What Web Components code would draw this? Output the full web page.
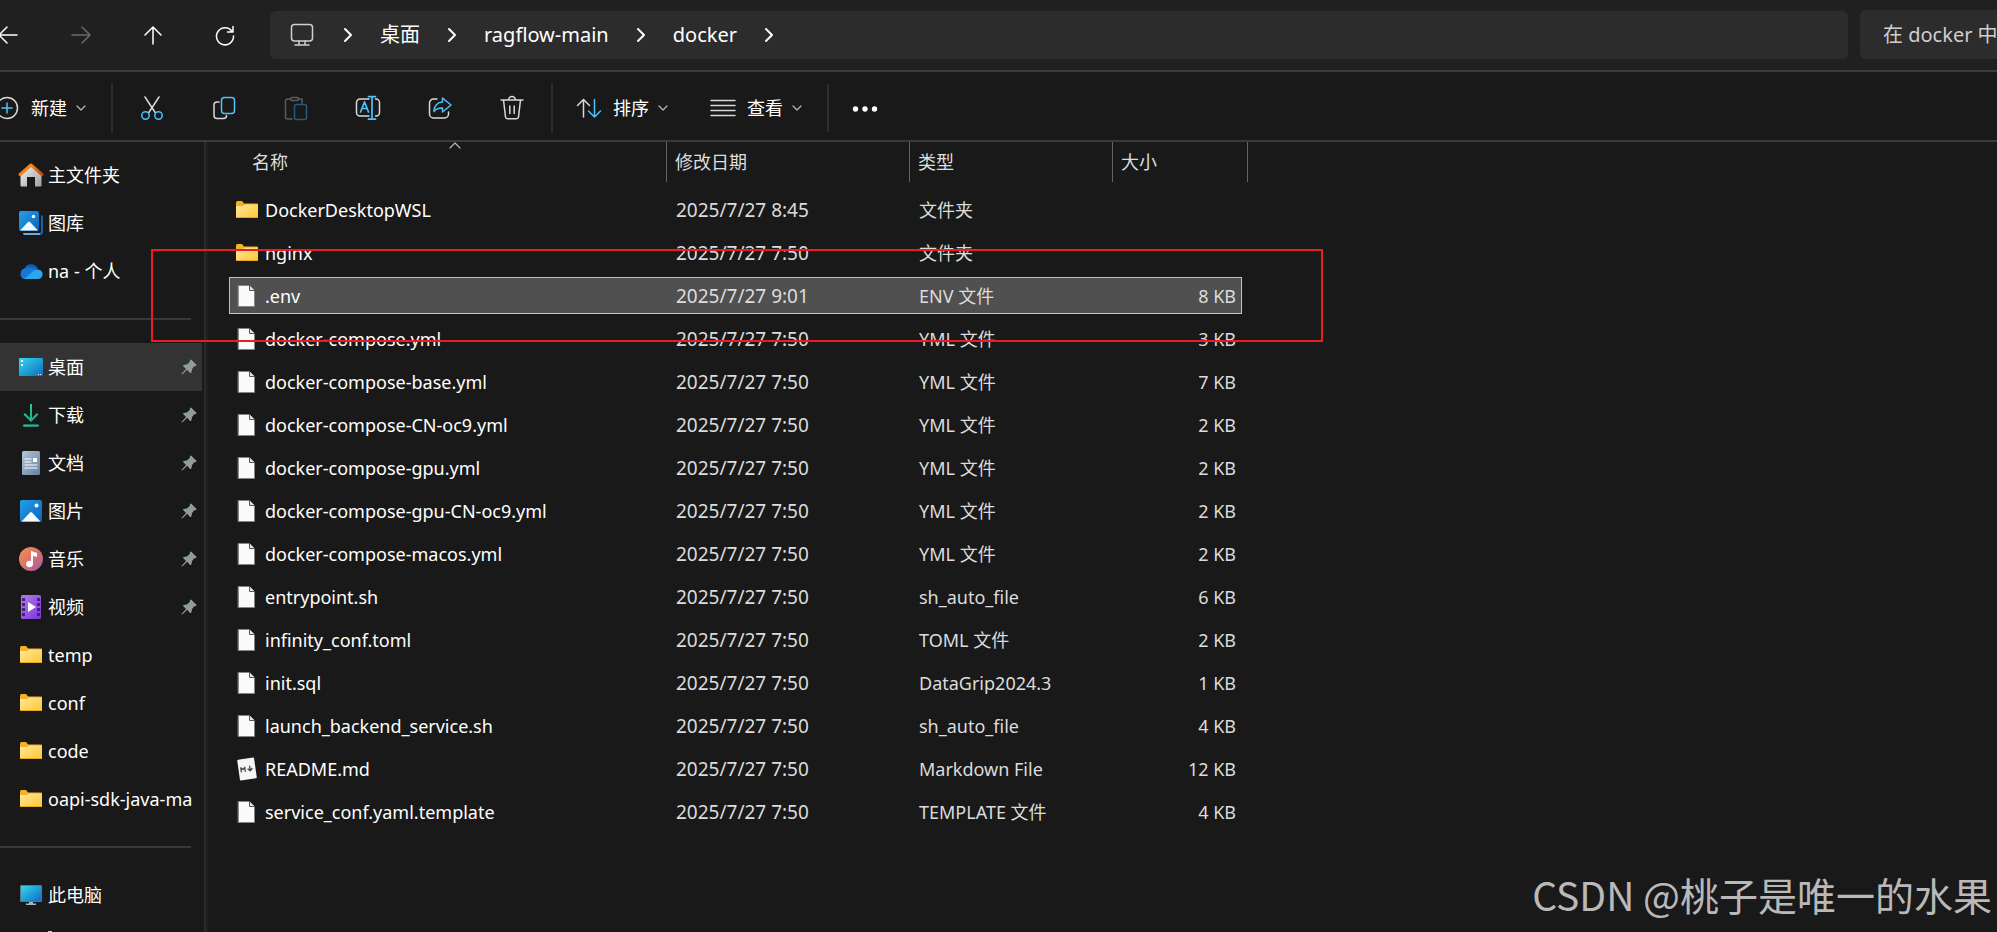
<!DOCTYPE html>
<html lang="zh-CN">
<head>
<meta charset="utf-8">
<title>docker</title>
<style>
	html, body {
		height: 100%;
		margin: 0;
	}

	body {
		background: #191919;
		color: #fff;
		font: 18px/24px "Noto Sans", "Noto Sans CJK SC", sans-serif;
		overflow: hidden;
	}
</style>
</head>
<body>
<file-explorer></file-explorer>

<script>
const icons = {
	back: `<path d="M19 12H1M9 4L1 12l8 8" transform="translate(1 0)"/>`,
	forward: `<path d="M3 12h18M13 4l8 8-8 8" stroke="#6b6b6b"/>`,
	up: `<path d="M12 21V4M4 12l8-8 8 8"/>`,
	refresh: `<path d="M19 8.500A8.500 8.500 0 1 0 20.500 13M20 3.500V9h-5.500"/>`,
	pc: `<rect x="1.500" y="1.500" width="21" height="16.500" rx="3" stroke="#d0d0d0"/><path d="M9 18v4M15 18v4M5 22h14" stroke="#d0d0d0"/>`,
	next: `<path d="M9 6l6 6-6 6" stroke-width="2"/>`,
	add: `<circle cx="12" cy="12" r="10.500" stroke="#d8d8d8"/><path d="M12 7v10M7 12h10" stroke="#4cc2ff"/>`,
	down: `<path d="M8 10l4 4 4-4" stroke="#b5b5b5" stroke-width="1.300"/>`,
	caret: `<path d="M7 14l5-5 5 5" stroke="#b5b5b5" stroke-width="1.200"/>`,
	cut: `<path d="M5 1l10.500 16M19 1L8.500 17" stroke="#d8d8d8"/><circle cx="5.500" cy="19.500" r="3.700" stroke="#4cc2ff"/><circle cx="18.500" cy="19.500" r="3.700" stroke="#4cc2ff"/>`,
	copy: `<path d="M7 6H5a3 3 0 0 0-3 3v10.500a3 3 0 0 0 3 3h6.500a3 3 0 0 0 3-3" stroke="#d8d8d8"/><rect x="9.500" y="1.500" width="13" height="16" rx="3" stroke="#4cc2ff"/>`,
	paste: `<path d="M6 3H3.500a2 2 0 0 0-2 2v16a2 2 0 0 0 2 2H8M15 3h3v4" stroke="#5c5c5c"/><rect x="6.500" y="1.500" width="8" height="3" rx="1.500" stroke="#5c5c5c"/><rect x="10.500" y="8.500" width="12" height="15" rx="2" stroke="#265a76"/>`,
	rename: `<path d="M13 3H4a3.500 3.500 0 0 0-3.500 3.500v10A3.500 3.500 0 0 0 4 20h9M19.500 3h.500a3.500 3.500 0 0 1 3.500 3.500v10A3.500 3.500 0 0 1 20 20h-.500" stroke="#d8d8d8"/><path d="M4.500 16l4-10 4 10M6 12.500h5M16 .700v22.500M12.500 .700h7M12.500 23.200h7" stroke="#4cc2ff" stroke-width="1.700"/>`,
	share: `<path d="M9 3H5.500a4 4 0 0 0-4 4v11a4 4 0 0 0 4 4h11a4 4 0 0 0 4-4v-2" stroke="#d8d8d8"/><path d="M14.500 2l8.500 7-8.500 7v-4c-4-.200-6.500 1-8.500 3.500C6 10 9.500 6 14.500 6z" stroke="#4cc2ff"/>`,
	trash: `<path d="M1 4h22M8.500 4a3.500 3.500 0 0 1 7 0M3.500 4l2 17a2 2 0 0 0 2 1.800h9a2 2 0 0 0 2-1.800l2-17M9.800 10v7.500M14.200 10v7.500" stroke="#d8d8d8"/>`,
	sort: `<path d="M6.500 21V3.500M.500 9.500l6-6 6 6" stroke="#d8d8d8"/><path d="M17.500 3.500V21M11.500 15l6 6 6-6" stroke="#4cc2ff"/>`,
	lines: `<path d="M0 4.500h24M0 9.500h24M0 14.500h24M0 19.500h24" stroke="#d8d8d8"/>`,
	more: `<g fill="#fff" stroke="none"><circle cx="2.500" cy="13" r="2.700"/><circle cx="12" cy="13" r="2.700"/><circle cx="21.500" cy="13" r="2.700"/></g>`,
	home: `<defs><linearGradient id="w" x2="1" y2="1"><stop stop-color="#f4f4f4"/><stop offset="1" stop-color="#a0a0a0"/></linearGradient><linearGradient id="r" x2="1"><stop stop-color="#f07c22"/><stop offset=".5" stop-color="#f58a1c"/><stop offset="1" stop-color="#c9420c"/></linearGradient></defs><path d="M1.500 11L12 1.500 22.500 11v11.500a1 1 0 0 1-1 1H16V14H8v9.500H2.500a1 1 0 0 1-1-1z" fill="url(#w)" stroke="none"/><path d="M1 11.500L12 2l11 9.500" stroke="url(#r)" stroke-width="3"/>`,
	gallery: `<defs><linearGradient id="p" x2="1" y2="1"><stop stop-color="#23a0e8"/><stop offset="1" stop-color="#0b62b8"/></linearGradient></defs><g stroke="none"><path d="M22 4a2 2 0 0 1 2 2v15a3 3 0 0 1-3 3H6a2 2 0 0 1-2-2h16a2 2 0 0 0 2-2z" fill="#1463b0"/><path d="M4 22h17v2H6a2 2 0 0 1-2-2z" fill="#6cacdf"/><rect width="20" height="20" rx="2" fill="url(#p)"/><path d="M1 19.500l8-8.500q1-1 2 0l8 8.500z" fill="#f2f8fd"/><circle cx="14.500" cy="5.500" r="1.700" fill="#fff"/></g>`,
	onedrive: `<g stroke="none"><path d="M5 10a7.500 7.500 0 0 1 14 0l-8 6-7-3z" fill="#0b5fb5"/><path d="M6 9.500A5.500 5.500 0 0 0 5 20h7l7-9C14 9 9 7 6 9.500z" fill="#1478d4"/><path d="M5 20l7-6c3-3 6-4.500 9-3a4.800 4.800 0 0 1-1.500 9z" fill="#28a8ea"/></g>`,
	desktop: `<defs><linearGradient id="d" x2="1" y2="1"><stop stop-color="#36d8ea"/><stop offset="1" stop-color="#0c6cc4"/></linearGradient></defs><g stroke="none"><rect y="3" width="24" height="18" rx="1" fill="url(#d)"/><path d="M2 5h2v2H2zM2 9h2v2H2zM19 19h1v1h-1zM21 19h1v1h-1z" fill="#fff"/></g>`,
	download: `<defs><linearGradient id="g" x2="1" y2="1"><stop stop-color="#35d07f"/><stop offset="1" stop-color="#12a5a5"/></linearGradient></defs><g stroke="none" fill="url(#g)"><path d="M11 1h2v14l5-5 1.500 1.500L12 19l-7.500-7.500L6 10l5 5z"/><rect x="4" y="21.500" width="16" height="2.200" rx="1"/></g>`,
	document: `<defs><linearGradient id="b" x2="1" y2="1"><stop stop-color="#b4c5d8"/><stop offset="1" stop-color="#6482a3"/></linearGradient></defs><rect x="3" width="18" height="24" rx="1.500" fill="url(#b)" stroke="none"/><path d="M6 8h6M6 11h6M6 14h12M6 17h12" stroke="#fff" stroke-width="1.200"/><path d="M14 7h4v4h-4z" fill="#fff" stroke="none"/>`,
	picture: `<defs><linearGradient id="p" x2="1" y2="1"><stop stop-color="#23a0e8"/><stop offset="1" stop-color="#0b62b8"/></linearGradient></defs><g stroke="none"><rect x="1" y="1" width="22" height="22" rx="2" fill="url(#p)"/><path d="M2.500 22.500l8.500-9q1-1 2 0l8.500 9z" fill="#f2f8fd"/><circle cx="17.500" cy="6.500" r="2" fill="#fff"/></g>`,
	music: `<defs><linearGradient id="m" x2="1" y2="1"><stop stop-color="#f6934e"/><stop offset=".55" stop-color="#d5706c"/><stop offset="1" stop-color="#9a5bb5"/></linearGradient></defs><g stroke="none"><circle cx="12" cy="12" r="12" fill="url(#m)"/><path d="M12 4l6 2v4l-4-1.300V17a3.500 3.300 0 1 1-2-3z" fill="#fff"/></g>`,
	video: `<defs><linearGradient id="v" x2="1" y2="1"><stop stop-color="#b57bf0"/><stop offset="1" stop-color="#7a34d8"/></linearGradient></defs><g stroke="none"><rect x="2" width="20" height="24" rx="1.500" fill="url(#v)"/><path d="M3 3h3v3H3zM3 8h3v3H3zM3 13h3v3H3zM3 18h3v3H3zM18 3h3v3h-3zM18 8h3v3h-3zM18 13h3v3h-3zM18 18h3v3h-3z" fill="#45217c"/><path d="M9 7l8 5-8 5z" fill="#fff"/></g>`,
	folder: `<defs><linearGradient id="f" x2="1" y2="1"><stop stop-color="#ffe7a0"/><stop offset="1" stop-color="#fdc72f"/></linearGradient></defs><g stroke="none"><path d="M1 4.500Q1 3 2.500 3H7l2 2.500h13q1 0 1 1V19H1z" fill="#f7b01e"/><path d="M1 8h7l2-1.500h13V19q0 1-1 1H2q-1 0-1-1z" fill="url(#f)"/><path d="M1 19h22q0 1-1 1H2q-1 0-1-1z" fill="#e8a820"/></g>`,
	file: `<path d="M3.500 1.500h11l5 5v16h-16z" fill="#fafafa" stroke="#858585" stroke-width="1"/><path d="M14.500 1.500v5h5" stroke="#555" fill="#e4e4e4" stroke-width="1"/>`,
	markdown: `<g transform="rotate(-8 12 12)"><rect x="3.500" y="1.500" width="17" height="21" rx="1" fill="#f5f5f5" stroke="none"/><path d="M6 14V10l2 2 2-2v4M15 9.500v4.500M13 12.200l2 2 2-2" stroke="#444" stroke-width="1.300"/></g>`,
	monitor: `<defs><linearGradient id="t" x2="1" y2="1"><stop stop-color="#36d8ea"/><stop offset="1" stop-color="#0c6cc4"/></linearGradient></defs><g stroke="none"><rect x="1" y="2" width="22" height="17" rx="1" fill="#5f7482"/><rect x="2" y="3" width="20" height="15" fill="url(#t)"/><path d="M10 19h4v1.500h3V22H7v-1.500h3z" fill="#a9b6c0"/></g>`,
	drive: `<rect x="10" width="4" height="3" fill="#cfcfcf" stroke="none"/>`,
	pin: `<path d="M13.500 2.500q1-1 2 0l6 6q1 1 0 2l-3 .800-2.500 3.700-1 4.500q-.800 1-1.800 0l-3.700-3.700L3.500 21.500 2 22l.500-1.500L8 14.500 4.500 11q-1-1 0-1.800L9 8.500l3.700-3z" fill="#909ca4" stroke="none"/>`
}

class UiIcon extends HTMLElement {
	constructor() {
		super()
		this.attachShadow({mode: 'open'})
	}

	connectedCallback() {
		this.shadowRoot.innerHTML = /*html*/`
			<style>
				:host { display: block; flex: none; width: var(--icon-size, 24px); height: var(--icon-size, 24px) }
				svg { display: block; width: 100%; height: 100%; overflow: visible }
			</style>
			<svg viewBox="0 0 24 24" fill="none" stroke="#fff" stroke-width="1.500" stroke-linecap="round" stroke-linejoin="round" aria-hidden="true">${icons[this.getAttribute('name')]}</svg>
		`
	}
}

customElements.define('ui-icon', UiIcon)

class NavBar extends HTMLElement {
	constructor() {
		super()
		this.attachShadow({mode: 'open'})
		this.shadowRoot.innerHTML = /*html*/`
			<style>
				:host {
					display: flex;
					align-items: end;
					height: 70px;
					padding-bottom: 11px;
					box-sizing: border-box;
					background: #202020;
				}

				.history { display: flex; margin-left: -27px; margin-right: 9px }

				button {
					display: grid;
					place-items: center;
					width: 72px;
					height: 48px;
					padding: 0;
					border: 0;
					background: none;
				}

				nav {
					flex: 1;
					height: 48px;
					padding-left: 20px;
					display: flex;
					align-items: center;
					background: #2c2c2c;
					border-radius: 6px;
				}

				ol { display: flex; align-items: center; gap: 20px; margin: 0; padding: 0 0 0 22px; list-style: none }
				li { display: flex; align-items: center; gap: 20px }
				a { color: #fff; font-size: 20px; line-height: 26px; text-decoration: none }

				input {
					flex: none;
					width: 137px;
					height: 49px;
					margin-left: 12px;
					padding: 0 0 0 23px;
					box-sizing: border-box;
					border: 0;
					border-radius: 6px 0 0 6px;
					background: #2c2c2c;
					color: #cfcfcf;
					font: inherit;
					font-size: 20px;
				}

				input::placeholder { color: #cfcfcf; opacity: 1 }
			</style>
			<div class="history">
				<button aria-label="后退"><ui-icon name="back"></ui-icon></button>
				<button aria-label="前进" disabled><ui-icon name="forward"></ui-icon></button>
				<button aria-label="上移"><ui-icon name="up"></ui-icon></button>
				<button aria-label="刷新"><ui-icon name="refresh"></ui-icon></button>
			</div>
			<nav aria-label="路径">
				<ui-icon name="pc"></ui-icon>
				<ol>
					<li><ui-icon name="next"></ui-icon><a href="#">桌面</a></li>
					<li><ui-icon name="next"></ui-icon><a href="#">ragflow-main</a></li>
					<li><ui-icon name="next"></ui-icon><a href="#">docker</a></li>
					<li><ui-icon name="next"></ui-icon></li>
				</ol>
			</nav>
			<input type="text" placeholder="在 docker 中" aria-label="搜索">
		`
	}
}

customElements.define('nav-bar', NavBar)

class ToolButton extends HTMLElement {
	constructor() {
		super()
		this.attachShadow({mode: 'open'})
		const menu = this.hasAttribute('menu')
		this.shadowRoot.innerHTML = /*html*/`
			<style>
				:host { display: block }

				button {
					display: flex;
					align-items: center;
					justify-content: center;
					gap: 12px;
					width: ${menu ? 'auto' : '72px'};
					height: 48px;
					padding: 0;
					border: 0;
					background: none;
					color: #fff;
					font: inherit;
				}

				.arrow { margin-left: -10px }
			</style>
			<button aria-label="${this.getAttribute('label') || this.textContent}">
				<ui-icon name="${this.getAttribute('icon')}"></ui-icon>
				${menu ? '<slot></slot><ui-icon class="arrow" name="down"></ui-icon>' : ''}
			</button>
		`
	}
}

class ToolBar extends HTMLElement {
	constructor() {
		super()
		this.attachShadow({mode: 'open'})
		this.shadowRoot.innerHTML = /*html*/`
			<style>
				:host {
					display: flex;
					align-items: center;
					height: 72px;
					padding-top: 4px;
					box-sizing: border-box;
					border: solid #3b3b3b;
					border-width: 2px 0;
				}

				.new { margin-left: -5px; margin-right: 18px }
				hr { width: 2px; height: 48px; margin: 0; border: 0; background: #2e2e2e }
				.group { display: flex; margin: 0 3px }
				.menus { gap: 36px; margin: 0 18px 0 24px }
			</style>
			<tool-button class="new" icon="add" menu>新建</tool-button>
			<hr>
			<div class="group">
				<tool-button icon="cut" label="剪切"></tool-button>
				<tool-button icon="copy" label="复制"></tool-button>
				<tool-button icon="paste" label="粘贴"></tool-button>
				<tool-button icon="rename" label="重命名"></tool-button>
				<tool-button icon="share" label="共享"></tool-button>
				<tool-button icon="trash" label="删除"></tool-button>
			</div>
			<hr>
			<div class="group menus">
				<tool-button icon="sort" menu>排序</tool-button>
				<tool-button icon="lines" menu>查看</tool-button>
			</div>
			<hr>
			<tool-button icon="more" label="更多"></tool-button>
		`
	}
}

class SideItem extends HTMLElement {
	constructor() {
		super()
		this.attachShadow({mode: 'open'})
	}

	connectedCallback() {
		this.shadowRoot.innerHTML = /*html*/`
			<style>
				:host { display: block; overflow: hidden }
				:host([active]) { background: #333 }

				a {
					display: flex;
					align-items: center;
					gap: 5px;
					height: 48px;
					padding: 0 4px 0 19px;
					color: #fff;
					text-decoration: none;
					white-space: nowrap;
				}

				:host([child]) a { padding-left: 38px }
				span { flex: 1; min-width: 0 }
				.pin { --icon-size: 18px }
			</style>
			<a href="#">
				<ui-icon name="${this.getAttribute('icon')}"></ui-icon>
				<span><slot></slot></span>
				${this.hasAttribute('pinned') ? '<ui-icon class="pin" name="pin"></ui-icon>' : ''}
			</a>
		`
	}
}

customElements.define('side-item', SideItem)

class SideBar extends HTMLElement {
	constructor() {
		super()
		this.attachShadow({mode: 'open'})
		this.shadowRoot.innerHTML = /*html*/`
			<style>
				:host {
					display: block;
					width: 202px;
					flex: none;
					padding: 9px 2px 0 0;
					overflow: hidden;
					border-right: 2px solid #2a2a2a;
					box-shadow: 2px 0 #1f1f1f;
				}

				hr { height: 2px; margin: 23px 11px 23px 0; border: 0; background: #3a3a3a }
			</style>
			<side-item icon="home">主文件夹</side-item>
			<side-item icon="gallery">图库</side-item>
			<side-item icon="onedrive">na - 个人</side-item>
			<hr>
			<side-item icon="desktop" pinned active>桌面</side-item>
			<side-item icon="download" pinned>下载</side-item>
			<side-item icon="document" pinned>文档</side-item>
			<side-item icon="picture" pinned>图片</side-item>
			<side-item icon="music" pinned>音乐</side-item>
			<side-item icon="video" pinned>视频</side-item>
			<side-item icon="folder">temp</side-item>
			<side-item icon="folder">conf</side-item>
			<side-item icon="folder">code</side-item>
			<side-item icon="folder">oapi-sdk-java-ma</side-item>
			<hr>
			<side-item icon="monitor">此电脑</side-item>
			<side-item icon="drive" child></side-item>
		`
	}
}

customElements.define('tool-button', ToolButton)
customElements.define('tool-bar', ToolBar)
customElements.define('side-bar', SideBar)

const files = [
	['folder', 'DockerDesktopWSL', '8:45', '文件夹', ''],
	['folder', 'nginx', '7:50', '文件夹', ''],
	['file', '.env', '9:01', 'ENV 文件', '8 KB'],
	['file', 'docker-compose.yml', '7:50', 'YML 文件', '3 KB'],
	['file', 'docker-compose-base.yml', '7:50', 'YML 文件', '7 KB'],
	['file', 'docker-compose-CN-oc9.yml', '7:50', 'YML 文件', '2 KB'],
	['file', 'docker-compose-gpu.yml', '7:50', 'YML 文件', '2 KB'],
	['file', 'docker-compose-gpu-CN-oc9.yml', '7:50', 'YML 文件', '2 KB'],
	['file', 'docker-compose-macos.yml', '7:50', 'YML 文件', '2 KB'],
	['file', 'entrypoint.sh', '7:50', 'sh_auto_file', '6 KB'],
	['file', 'infinity_conf.toml', '7:50', 'TOML 文件', '2 KB'],
	['file', 'init.sql', '7:50', 'DataGrip2024.3', '1 KB'],
	['file', 'launch_backend_service.sh', '7:50', 'sh_auto_file', '4 KB'],
	['markdown', 'README.md', '7:50', 'Markdown File', '12 KB'],
	['file', 'service_conf.yaml.template', '7:50', 'TEMPLATE 文件', '4 KB']
]

class FileList extends HTMLElement {
	constructor() {
		super()
		this.attachShadow({mode: 'open'})
		this.shadowRoot.innerHTML = /*html*/`
			<style>
				:host { display: block; flex: 1; min-width: 0; padding-left: 23px }
				table, thead, tbody { display: block }

				tr {
					display: grid;
					grid-template-columns: 436px 243px 203px 1fr;
					width: 1013px;
					height: 37px;
					margin-bottom: 6px;
					box-sizing: border-box;
					border: 1px solid transparent;
				}

				thead tr {
					grid-template-columns: 423px 243px 203px 135px;
					width: auto;
					height: 40px;
					margin: 0 0 9px 15px;
					border: 0;
				}

				th {
					position: relative;
					padding: 8px;
					border-right: 1px solid #636363;
					color: #dedede;
					font-weight: 400;
					text-align: left;
				}

				th ui-icon { position: absolute; left: 50%; top: -8px; margin-left: -12px }

				td {
					display: flex;
					align-items: center;
					padding: 0 10px;
					color: #dcdcdc;
					white-space: nowrap;
				}

				td:first-child { padding-left: 5px; gap: 6px; color: #fff }
				td:nth-child(2) { font-size: 19px }
				td:last-child { justify-content: end; padding-right: 5px }

				.selected { background: #505050; border-color: #c2c2c2 }
			</style>
			<table>
				<thead>
					<tr>
						<th>名称<ui-icon name="caret"></ui-icon></th>
						<th>修改日期</th>
						<th>类型</th>
						<th>大小</th>
					</tr>
				</thead>
				<tbody>
					${files.map(([icon, name, time, type, size]) => `
						<tr${name === '.env' ? ' class="selected"' : ''}>
							<td><ui-icon name="${icon}"></ui-icon>${name}</td>
							<td>2025/7/27 ${time}</td>
							<td>${type}</td>
							<td>${size}</td>
						</tr>
					`).join('')}
				</tbody>
			</table>
		`
	}
}

customElements.define('file-list', FileList)

class FileExplorer extends HTMLElement {
	constructor() {
		super()
		this.attachShadow({mode: 'open'})
		this.shadowRoot.innerHTML = /*html*/`
			<style>
				:host {
					position: relative;
					display: flex;
					flex-direction: column;
					height: 100%;
					overflow: hidden;
				}

				main { flex: 1; min-height: 0; display: flex }

				/* marker drawn over the rows */
				.marker {
					position: absolute;
					left: 151px;
					top: 249px;
					width: 1172px;
					height: 93px;
					box-sizing: border-box;
					border: 2px solid #ed1c24;
					pointer-events: none;
				}

				.watermark {
					position: absolute;
					right: 5px;
					bottom: 10px;
					color: #b9b9b9;
					font: 39px/56px "Noto Sans CJK SC", sans-serif;
				}
			</style>
			<nav-bar></nav-bar>
			<tool-bar></tool-bar>
			<main>
				<side-bar></side-bar>
				<file-list></file-list>
			</main>
			<div class="marker"></div>
			<div class="watermark">CSDN @桃子是唯一的水果</div>
		`
	}
}

customElements.define('file-explorer', FileExplorer)
</script>
</body>
</html>
